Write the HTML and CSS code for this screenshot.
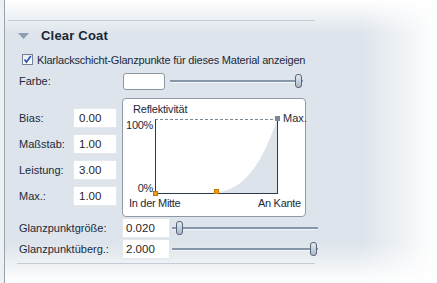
FILE: index.html
```html
<!DOCTYPE html>
<html lang="de">
<head>
    <meta charset="UTF-8">
    <title>Clear Coat</title>
    <link rel="stylesheet" href="styles.css">
</head>
<body>
    <div class="panel">
        <div class="rule"></div>

        <div class="section-head">
            <svg class="caret" width="11" height="6" viewBox="0 0 11 6"><path d="M0 0 H11 L5.5 6 Z" fill="#8e9db0"/></svg>
            <h2>Clear Coat</h2>
        </div>

        <label class="check-row">
            <span class="checkbox">
                <svg width="9" height="9" viewBox="0 0 9 9"><path d="M1.5 4.5 L3.5 7 L7.8 1" fill="none" stroke="#2a55b8" stroke-width="1.7"/></svg>
            </span>
            Klarlackschicht-Glanzpunkte für dieses Material anzeigen
        </label>

        <div class="row farbe">
            <span class="label">Farbe:</span>
            <span class="swatch"></span>
            <div class="slider slider-farbe"><span class="track"></span><span class="thumb thumb-end"></span></div>
        </div>

        <div class="main">
            <div class="params">
                <div class="param"><span class="label">Bias:</span><span class="field">0.00</span></div>
                <div class="param"><span class="label">Maßstab:</span><span class="field">1.00</span></div>
                <div class="param"><span class="label">Leistung:</span><span class="field">3.00</span></div>
                <div class="param"><span class="label">Max.:</span><span class="field">1.00</span></div>
            </div>

            <div class="group">
                <div class="group-title">Reflektivität</div>
                <div class="chart">
                    <div class="y-labels"><span>100%</span><span>0%</span></div>
                    <div class="plot">
                        <svg class="curve" viewBox="0 0 121 73" preserveAspectRatio="none">
                            <path d="M45 73 C70.3 73 95.7 73 121 0 L121 73 Z" fill="#dde3ea"/>
                        </svg>
                        <span class="marker orange m-start"></span>
                        <span class="marker orange m-mid"></span>
                        <span class="marker grey m-max"></span>
                    </div>
                    <div class="max-label">Max.</div>
                    <div class="x-labels"><span>In der Mitte</span><span>An Kante</span></div>
                </div>
            </div>
        </div>

        <div class="row gloss">
            <span class="label">Glanzpunktgröße:</span>
            <span class="field wide">0.020</span>
            <div class="slider slider-gloss"><span class="track"></span><span class="thumb thumb-start"></span></div>
        </div>
        <div class="row gloss">
            <span class="label">Glanzpunktüberg.:</span>
            <span class="field wide">2.000</span>
            <div class="slider slider-gloss"><span class="track"></span><span class="thumb thumb-end"></span></div>
        </div>

        <div class="rule bottom"></div>
    </div>
</body>
</html>
```

FILE: styles.css
```css
* {
    margin: 0;
    padding: 0;
    box-sizing: border-box;
}

html, body {
    height: 100%;
}

body {
    font-family: "Liberation Sans", Arial, sans-serif;
    font-size: 11px;
    color: #1b2a3b;
    overflow: hidden;
    background:
        linear-gradient(to right, #eef1f4 0, #eef1f4 4px, rgba(255, 255, 255, 0) 4px),
        linear-gradient(to bottom, #fff 0, rgba(255, 255, 255, 0) 34px),
        linear-gradient(to top, #fff 0, rgba(255, 255, 255, 0) 40px),
        linear-gradient(to left, #fff 0, rgba(255, 255, 255, 0) 75px),
        #dde4eb;
}

.panel {
    margin-left: 4px;
    height: 100%;
    border-left: 1px solid #98a3ae;
    padding: 20px 0 0 14px;
}

.rule {
    margin-left: -11px;
    width: 307px;
    height: 1px;
    background: #c3ccd6;
}

.rule.bottom {
    margin-top: 4px;
    margin-left: -2px;
    width: 298px;
}

.section-head {
    height: 28px;
    display: flex;
    align-items: center;
}

.caret {
    margin-left: -1px;
    margin-top: 1px;
}

.section-head h2 {
    margin-left: 12px;
    font-size: 13px;
    font-weight: bold;
    color: #1a2636;
    letter-spacing: 0.2px;
}

.check-row {
    height: 21px;
    display: flex;
    align-items: center;
    padding-left: 3px;
    letter-spacing: -0.2px;
}

.checkbox {
    width: 11px;
    height: 11px;
    margin-right: 4px;
    border: 1px solid #72839a;
    background: linear-gradient(#e9edf2, #ffffff);
    display: flex;
    align-items: center;
    justify-content: center;
}

.row {
    display: flex;
    align-items: center;
}

.label {
    flex: none;
}

.farbe {
    height: 22px;
}

.farbe .label {
    width: 104px;
}

.swatch {
    width: 42px;
    height: 17px;
    background: #fff;
    border: 1px solid #8c97a3;
    border-radius: 3px;
}

/* sliders */
.slider {
    position: relative;
    height: 14px;
    display: flex;
    align-items: center;
}

.slider-farbe {
    width: 133px;
    margin-left: 5px;
}

.slider-gloss {
    width: 146px;
    margin-left: 2px;
}

.track {
    width: 100%;
    height: 2px;
    background: #8797aa;
    box-shadow: 0 1px 0 #f4f7fa;
}

.thumb {
    position: absolute;
    top: 0;
    width: 7px;
    height: 14px;
    border: 1px solid #56667a;
    border-radius: 3px;
    background: linear-gradient(#e3eaf1, #aab9c9);
}

.thumb-start {
    left: 4px;
}

.thumb-end {
    right: 1px;
}

/* parameters + chart */
.main {
    margin-top: 6px;
    display: flex;
}

.params {
    width: 103px;
    padding-top: 10px;
    display: flex;
    flex-direction: column;
    gap: 6px;
}

.param {
    height: 20px;
    display: flex;
    align-items: center;
}

.param .label {
    width: 54px;
}

.field {
    width: 44px;
    height: 20px;
    line-height: 18px;
    padding-left: 5px;
    background: #fff;
    border: 1px solid #e3e8ed;
    color: #2b2424;
    font-size: 11.5px;
}

.field.wide {
    width: 48px;
    padding-left: 3px;
}

.group {
    width: 184px;
    height: 119px;
    background: #fff;
    border: 1px solid #8e9aa6;
    border-radius: 4px;
}

.group-title {
    margin: 3px 0 0 10px;
    line-height: 14px;
    letter-spacing: -0.2px;
}

.chart {
    margin-top: 3px;
    display: grid;
    grid-template-columns: 32px 123px 1fr;
}

.y-labels {
    display: flex;
    flex-direction: column;
    justify-content: space-between;
    align-items: flex-end;
    padding-right: 2px;
    line-height: 12px;
    letter-spacing: -0.3px;
}

.plot {
    position: relative;
    height: 75px;
    border: 1px solid #2d3a4a;
    border-top: 1px dashed #7a8692;
}

.curve {
    display: block;
    width: 100%;
    height: 100%;
}

.marker {
    position: absolute;
    width: 5px;
    height: 5px;
}

.orange {
    background: #f0a010;
    border: 1px solid #c47400;
}

.grey {
    background: #7d8892;
}

.m-start {
    left: -3px;
    top: 71px;
}

.m-mid {
    left: 58px;
    top: 69px;
}

.m-max {
    left: 119px;
    top: -4px;
}

.max-label {
    margin-top: -7px;
    padding-left: 5px;
    line-height: 12px;
}

.x-labels {
    grid-column: 1 / -1;
    display: flex;
    justify-content: space-between;
    margin-top: 3px;
    padding: 0 6px;
    line-height: 12px;
    letter-spacing: -0.3px;
}

/* gloss rows */
.gloss {
    height: 20px;
    margin-top: 1px;
}

.gloss .label {
    width: 103px;
}
```
